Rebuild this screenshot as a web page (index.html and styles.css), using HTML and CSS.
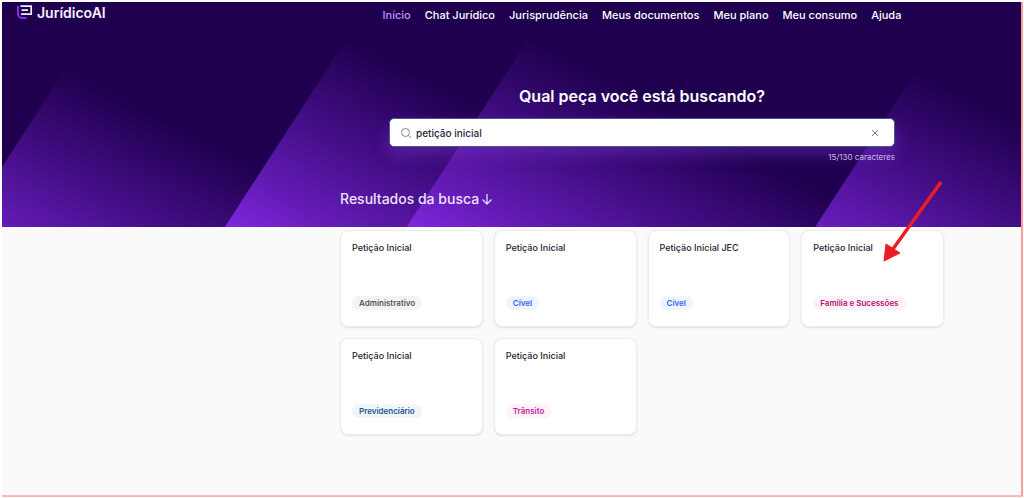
FILE: index.html
```html
<!DOCTYPE html>
<html lang="pt-BR">
<head>
<meta charset="utf-8">
<meta name="viewport" content="width=device-width, initial-scale=1">
<title>JurídicoAI</title>
<link rel="stylesheet" href="styles.css">
</head>
<body>
<div class="page">
  <header class="hero">
    <svg class="hero-art" viewBox="0 0 1020 225" preserveAspectRatio="none" aria-hidden="true">
      <defs>
        <linearGradient id="beam" gradientUnits="userSpaceOnUse" x1="0" y1="0" x2="-106" y2="202">
          <stop offset="0" stop-color="#1f004f"/>
          <stop offset="0.4" stop-color="#430e85"/>
          <stop offset="0.75" stop-color="#641bb6"/>
          <stop offset="1" stop-color="#8227e2"/>
        </linearGradient>
      </defs>
      <g fill="url(#beam)">
        <path transform="translate(64 66)" d="M43-66L-103 159H1000V-66Z"/>
        <path transform="translate(346 36)" d="M23-36L-123 189H1000V-36Z"/>
        <path transform="translate(528 36)" d="M23-36L-123 189H1000V-36Z"/>
        <path transform="translate(915 69)" d="M45-69L-101 156H1000V-69Z"/>
      </g>
    </svg>
    <div class="topbar">
      <a class="brand" href="#">
        <svg class="brand-mark" viewBox="0 0 16 15" fill="none" aria-hidden="true">
          <path d="M1 1v7.500a4.500 4.500 0 0 0 4.500 4.500h4" stroke="#8130e8" stroke-width="2"/>
          <path d="M3.500 1.200H14.200V9.200H4M4.500 5.200H11" stroke="#f4efff" stroke-width="1.700"/>
        </svg>
        <span>JurídicoAI</span>
      </a>
      <nav class="nav">
        <a class="active" href="#">Início</a>
        <a href="#">Chat Jurídico</a>
        <a href="#">Jurisprudência</a>
        <a href="#">Meus documentos</a>
        <a href="#">Meu plano</a>
        <a href="#">Meu consumo</a>
        <a href="#">Ajuda</a>
      </nav>
    </div>
    <div class="content hero-content">
      <h1>Qual peça você está buscando?</h1>
      <form class="search">
        <div class="search-box">
          <svg class="icon-search" viewBox="0 0 12 12" fill="none" stroke="#80849b" aria-hidden="true"><circle cx="5.500" cy="5.500" r="4"/><path d="M8.500 8.500L11 11"/></svg>
          <input type="text" value="petição inicial" aria-label="Qual peça você está buscando?">
          <button type="button" aria-label="Limpar"><svg viewBox="0 0 8 8" stroke="#777b92" aria-hidden="true"><path d="M1 1L7 7M7 1L1 7"/></svg></button>
        </div>
        <p class="counter">15/130 caracteres</p>
      </form>
      <h2>Resultados da busca <svg viewBox="0 0 12 12" fill="none" stroke="#e6d9fa" stroke-width="1.300" aria-hidden="true"><path d="M6 1V11M1.500 6.500L6 11L10.500 6.500"/></svg></h2>
    </div>
  </header>
  <main class="content cards">
    <a class="card" href="#"><h3>Petição Inicial</h3><span class="tag gray">Administrativo</span></a>
    <a class="card" href="#"><h3>Petição Inicial</h3><span class="tag blue">Cível</span></a>
    <a class="card" href="#"><h3>Petição Inicial JEC</h3><span class="tag blue">Cível</span></a>
    <a class="card marked" href="#"><h3>Petição Inicial</h3><span class="tag magenta">Família e Sucessões</span>
      <svg class="pointer" viewBox="0 0 60 82" aria-hidden="true"><path d="M58 2L10 69" stroke="#ec1c24" stroke-width="3.500"/><path d="M1 81L3 64L17 73Z" fill="#ec1c24" stroke="#ec1c24"/></svg>
    </a>
    <a class="card" href="#"><h3>Petição Inicial</h3><span class="tag navy">Previdenciário</span></a>
    <a class="card" href="#"><h3>Petição Inicial</h3><span class="tag pink">Trânsito</span></a>
  </main>
</div>
</body>
</html>
```
FILE: styles.css
```css
* { box-sizing: border-box; }
body {
  margin: 0;
  padding: 2px 1px 1px 2px;
  background: #fff;
  font-family: Inter, "Liberation Sans", sans-serif;
}
h1, h2, h3, p { margin: 0; }
a { color: inherit; text-decoration: none; }
.page {
  min-height: calc(100vh - 3px);
  background: #fafafa;
  border-right: 2px solid #ff9c9c;
  border-bottom: 2px solid #ffb5b5;
}
.hero {
  position: relative;
  background: #1f004f;
  color: #fff;
}
.hero-art {
  position: absolute;
  inset: 0;
  width: 100%;
  height: 100%;
}
.topbar {
  position: relative;
  display: grid;
  grid-template-columns: 261px 1fr;
  height: 26px;
}
.brand {
  display: flex;
  align-items: center;
  align-self: start;
  gap: 4px;
  height: 20px;
  padding-left: 15px;
  font-size: 14px;
  font-weight: 600;
  color: #f4efff;
}
.brand-mark { width: 16px; height: 15px; }
.nav {
  display: flex;
  justify-content: center;
  align-items: center;
  gap: 14px;
  font-size: 11px;
  font-weight: 500;
  white-space: nowrap;
}
.nav .active { color: #c48dff; }
.content {
  position: relative;
  width: 604px;
  max-width: calc(100% - 276px);
  margin-left: calc(261px + (100% - 261px - 604px) / 2);
}
.hero-content { padding: 58px 0 18px; }
h1 {
  font-size: 16px;
  line-height: 20px;
  font-weight: 600;
  text-align: center;
}
.search { padding: 12px 49px 0; }
.search-box {
  display: flex;
  align-items: center;
  gap: 4px;
  height: 29px;
  padding: 0 13px 0 10px;
  background: #fff;
  border: 1px solid #4a5588;
  border-radius: 5px;
  box-shadow: 0 8px 16px rgba(130, 60, 220, 0.4);
}
.icon-search { width: 12px; height: 12px; flex: none; }
.search-box input {
  flex: 1;
  min-width: 0;
  padding: 0;
  border: 0;
  outline: 0;
  background: none;
  font: 500 10px Inter, sans-serif;
  color: #25253b;
}
.search-box button {
  display: flex;
  padding: 2px;
  border: 0;
  background: none;
}
.search-box button svg { width: 8px; height: 8px; }
.counter {
  padding-top: 4px;
  font-size: 8px;
  line-height: 12px;
  text-align: right;
  color: #cfb9ef;
}
h2 {
  display: flex;
  align-items: center;
  gap: 2px;
  padding-top: 26px;
  font-size: 14px;
  line-height: 20px;
  font-weight: 500;
  color: #ece2fb;
}
h2 svg { width: 12px; height: 12px; }
.cards {
  display: grid;
  grid-template-columns: repeat(4, 1fr);
  gap: 11px;
  padding-top: 3px;
}
.card {
  position: relative;
  display: flex;
  flex-direction: column;
  justify-content: space-between;
  align-items: flex-start;
  min-height: 97px;
  padding: 11px 11px 16px;
  background: #fff;
  border: 1px solid #ececee;
  border-radius: 8px;
  box-shadow: 0 1px 2px rgba(0, 0, 0, 0.1);
}
h3 {
  font-size: 9px;
  line-height: 12px;
  font-weight: 500;
  color: #22222f;
}
.tag {
  padding: 0 7px;
  border-radius: 7px;
  font-size: 8px;
  line-height: 14px;
  font-weight: 600;
  white-space: nowrap;
}
.gray { background: #f4f4f5; color: #55555e; }
.blue { background: #eff4ff; color: #2f66f2; }
.magenta { background: #fdf2f8; color: #b31672; }
.navy { background: #f0f5fa; color: #285488; }
.pink { background: #fdf2fa; color: #c72499; }
.pointer {
  position: absolute;
  left: 81px;
  bottom: 64px;
  width: 60px;
  height: 82px;
}
```
